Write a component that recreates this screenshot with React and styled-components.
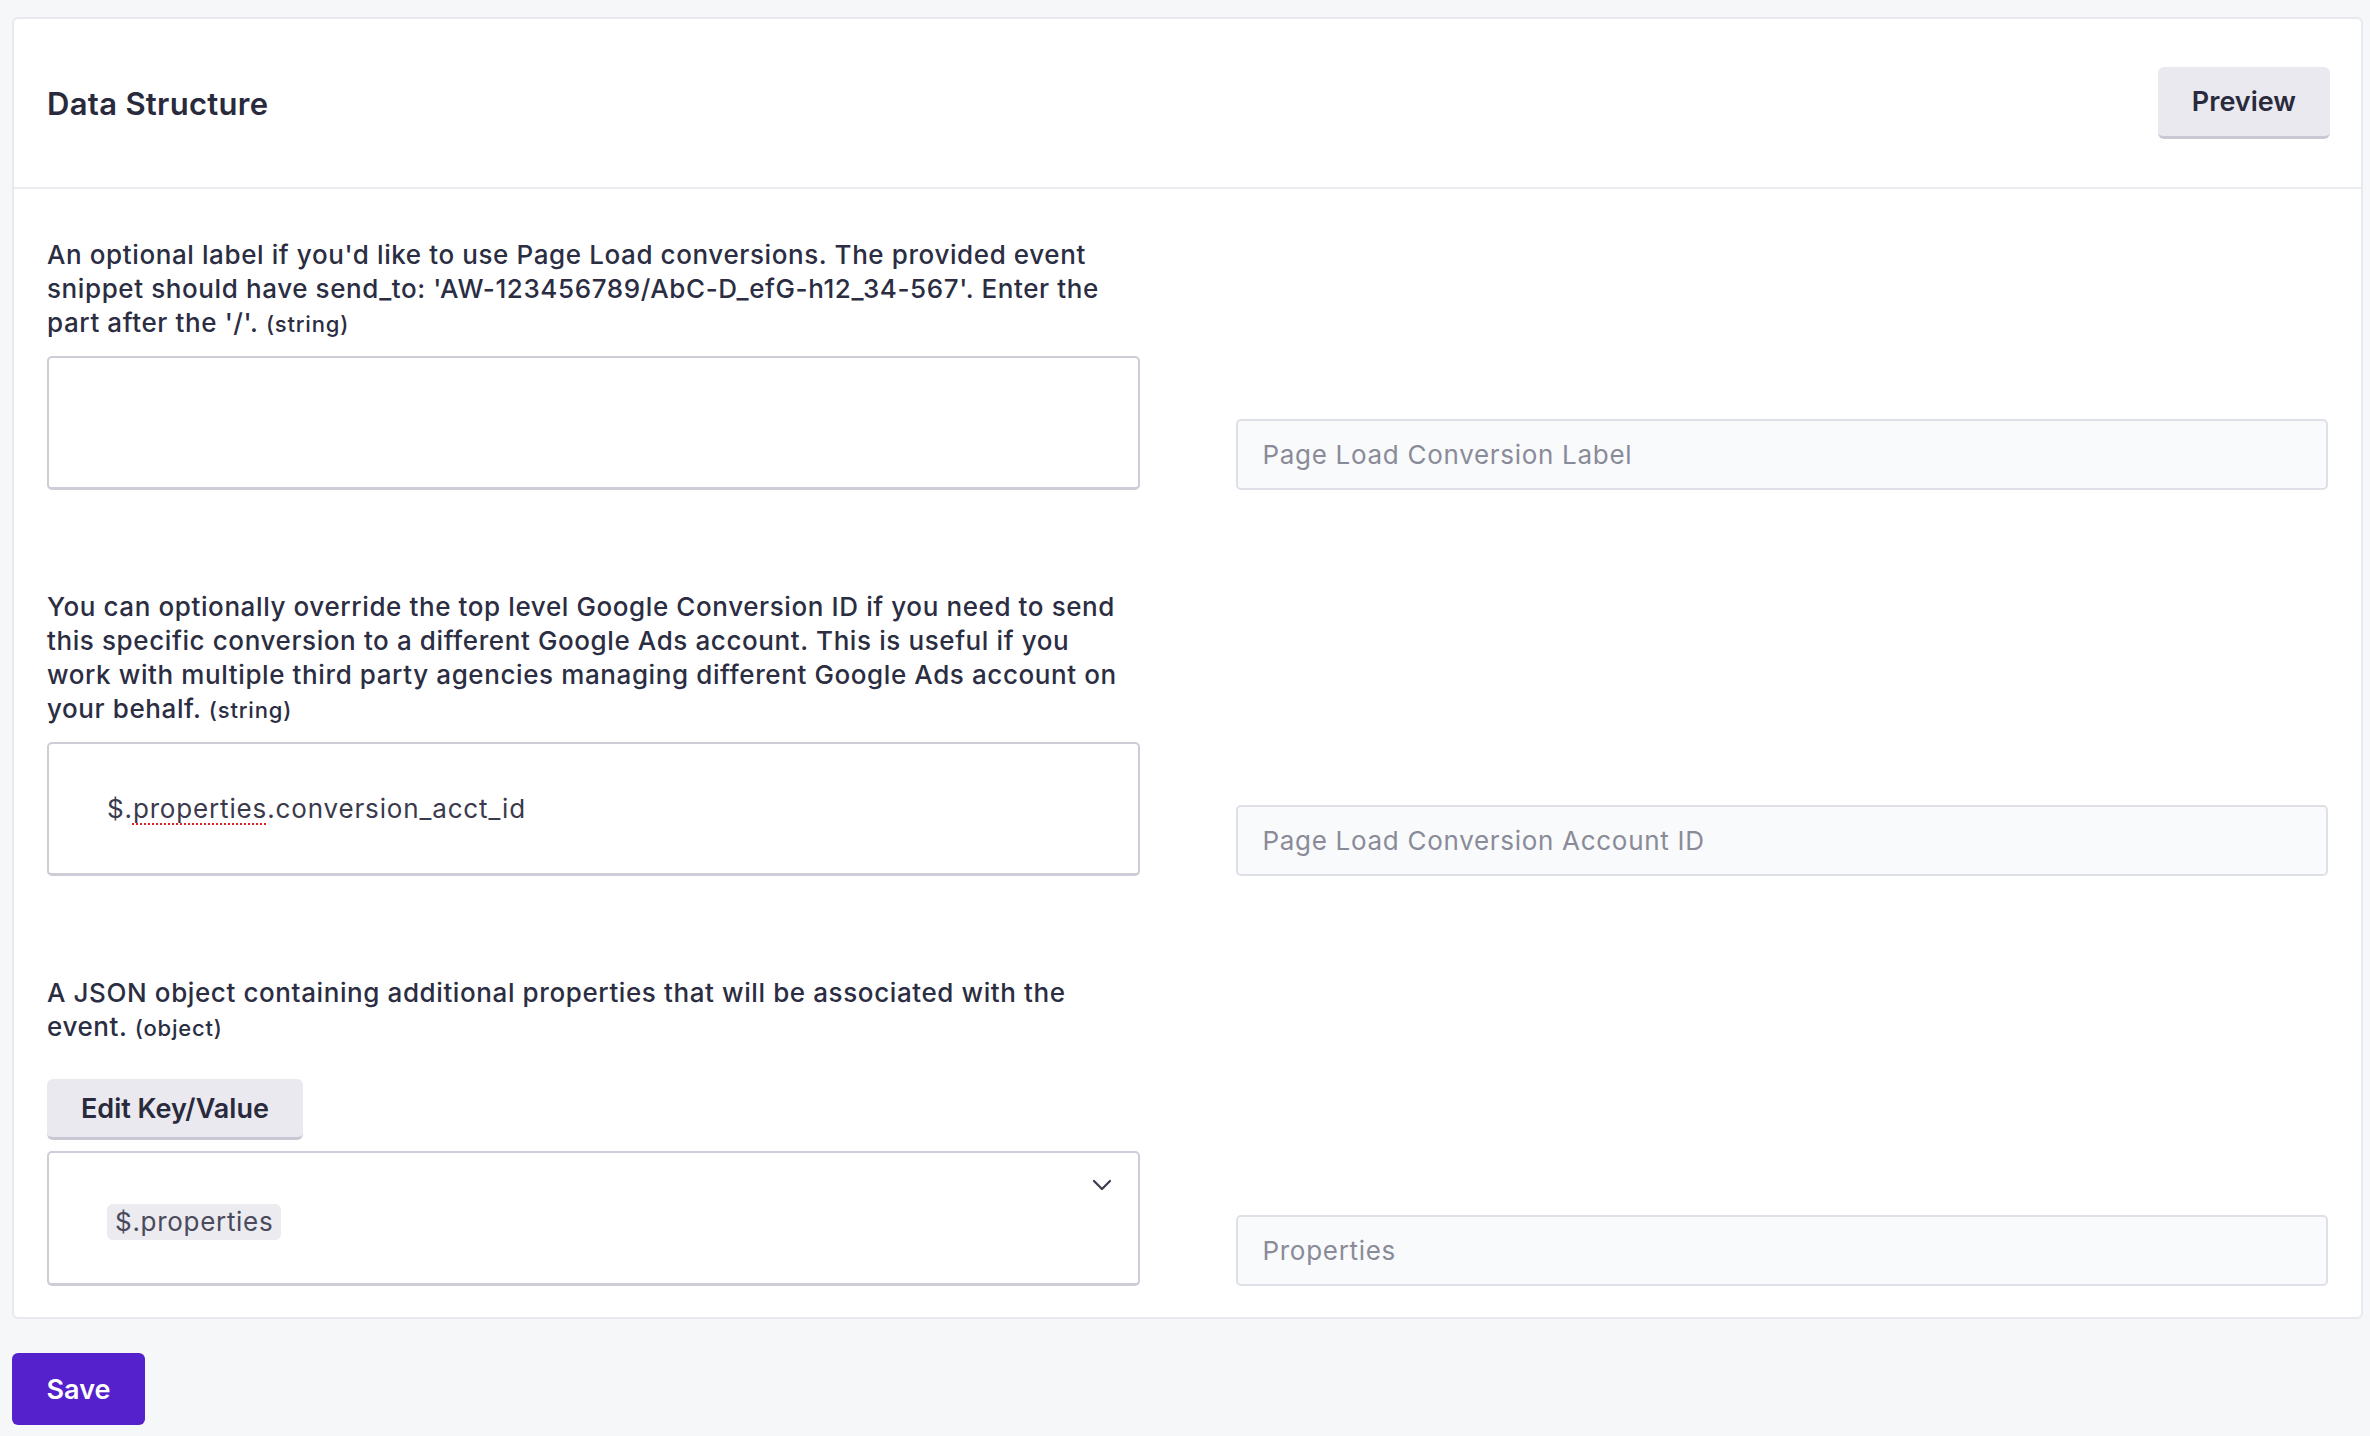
import React from 'react';
import styled, { createGlobalStyle } from 'styled-components';

const fields = [
  {
    id: 'label',
    text: "An optional label if you'd like to use Page Load conversions. The provided event snippet should have send_to: 'AW-123456789/AbC-D_efG-h12_34-567'. Enter the part after the '/'.",
    type: 'string',
    placeholder: 'Page Load Conversion Label',
  },
  {
    id: 'account',
    text: 'You can optionally override the top level Google Conversion ID if you need to send this specific conversion to a different Google Ads account. This is useful if you work with multiple third party agencies managing different Google Ads account on your behalf.',
    type: 'string',
    placeholder: 'Page Load Conversion Account ID',
    value: true,
  },
];

const ChevronIcon = () => (
  <svg width="20" height="12" viewBox="0 0 20 12" fill="none">
    <polyline points="2,2 10,10 18,2" stroke="#3a3a4c" strokeWidth="2.2" strokeLinecap="round" strokeLinejoin="round" />
  </svg>
);

const App = () => {
  return (
    <Page>
      <GlobalStyle />
      <Card>
        <Header>
          <Title>Data Structure</Title>
          <GrayButton>Preview</GrayButton>
        </Header>

        <Body>
          {fields.map(field => (
            <FieldRow key={field.id}>
              <LeftCol>
                <Description>
                  {field.text} <TypeHint>({field.type})</TypeHint>
                </Description>
                <TextArea>
                  {field.value && (
                    <ValueText>
                      $.<Misspelled>properties</Misspelled>.conversion_acct_id
                    </ValueText>
                  )}
                </TextArea>
              </LeftCol>
              <Placeholder>{field.placeholder}</Placeholder>
            </FieldRow>
          ))}

          <FieldRow>
            <LeftCol>
              <Description>
                A JSON object containing additional properties that will be associated with the event. <TypeHint>(object)</TypeHint>
              </Description>
              <GrayButton small>Edit Key/Value</GrayButton>
              <SelectBox>
                <Chip>$.properties</Chip>
                <Chevron>
                  <ChevronIcon />
                </Chevron>
              </SelectBox>
            </LeftCol>
            <Placeholder>Properties</Placeholder>
          </FieldRow>
        </Body>
      </Card>

      <SaveButton>Save</SaveButton>
    </Page>
  );
};

export default App;

const GlobalStyle = createGlobalStyle`
  html, body {
    margin: 0;
    padding: 0;
    background: #f6f7f9;
    font-family: Inter, "Noto Sans", "Liberation Sans", sans-serif;
    color: #2b2d42;
  }
  * {
    box-sizing: border-box;
  }
`;

const Page = styled.div`
  padding: 17px 7px 14px 12px;
`;

const Card = styled.div`
  background: #fff;
  border: 2px solid #e8e9ee;
  border-radius: 6px;
`;

const Header = styled.div`
  display: flex;
  align-items: center;
  justify-content: space-between;
  height: 170px;
  padding: 0 31px 0 33px;
  border-bottom: 2px solid #ebebf0;
`;

const Title = styled.h2`
  margin: 0;
  font-size: 31px;
  letter-spacing: 0.3px;
  font-weight: 600;
  color: #2a2a3d;
`;

const GrayButton = styled.button`
  align-self: ${p => (p.small ? 'flex-start' : 'center')};
  height: ${p => (p.small ? '61px' : '72px')};
  margin: ${p => (p.small ? '19px 0 11px' : '0')};
  padding: 0 34px;
  background: #e9e9ef;
  border: none;
  border-bottom: 3px solid #c8c8d4;
  border-radius: 6px;
  font-family: inherit;
  font-size: 27px;
  font-weight: 600;
  color: #2a2a3d;
  cursor: pointer;
`;

const Body = styled.div`
  display: flex;
  flex-direction: column;
  gap: 100px;
  padding: 49px 33px 31px;
`;

const FieldRow = styled.div`
  display: grid;
  grid-template-columns: 1fr 1fr;
  column-gap: 96px;
  align-items: end;
`;

const LeftCol = styled.div`
  display: flex;
  flex-direction: column;
`;

const Description = styled.p`
  margin: 0 0 15px;
  font-size: 26px;
  font-weight: 500;
  letter-spacing: 0.6px;
  line-height: 34px;
  color: #2b2d42;
`;

const TypeHint = styled.span`
  font-size: 22px;
  letter-spacing: 0.8px;
`;

const TextArea = styled.div`
  display: flex;
  align-items: center;
  height: 134px;
  padding: 0 58px;
  background: #fff;
  border: 2px solid #cdcdd8;
  border-bottom-width: 3px;
  border-radius: 5px;
`;

const ValueText = styled.span`
  font-size: 26px;
  letter-spacing: 0.85px;
  color: #3a3a4c;
`;

const Misspelled = styled.span`
  text-decoration: underline dotted #e02020;
  text-decoration-thickness: 2px;
  text-underline-offset: 5px;
`;

const Placeholder = styled.div`
  display: flex;
  align-items: center;
  height: 71px;
  padding: 0 25px;
  background: #f9fafb;
  border: 2px solid #dfdfe7;
  border-radius: 5px;
  font-size: 26px;
  letter-spacing: 0.7px;
  color: #8a8b99;
`;

const SelectBox = styled.div`
  position: relative;
  display: flex;
  align-items: center;
  height: 135px;
  padding: 7px 58px 0;
  background: #fff;
  border: 2px solid #cdcdd8;
  border-bottom-width: 3px;
  border-radius: 5px;
`;

const Chip = styled.span`
  padding: 3px 8px;
  background: #ebebf0;
  border-radius: 6px;
  font-size: 26px;
  letter-spacing: 0.7px;
  line-height: 30px;
  color: #4a4a5c;
`;

const Chevron = styled.span`
  position: absolute;
  top: 26px;
  right: 26px;
  display: flex;
`;

const SaveButton = styled.button`
  display: block;
  margin-top: 34px;
  width: 133px;
  height: 72px;
  background: #5521cc;
  border: none;
  border-radius: 6px;
  font-family: inherit;
  font-size: 27px;
  font-weight: 600;
  color: #fff;
  cursor: pointer;
`;
